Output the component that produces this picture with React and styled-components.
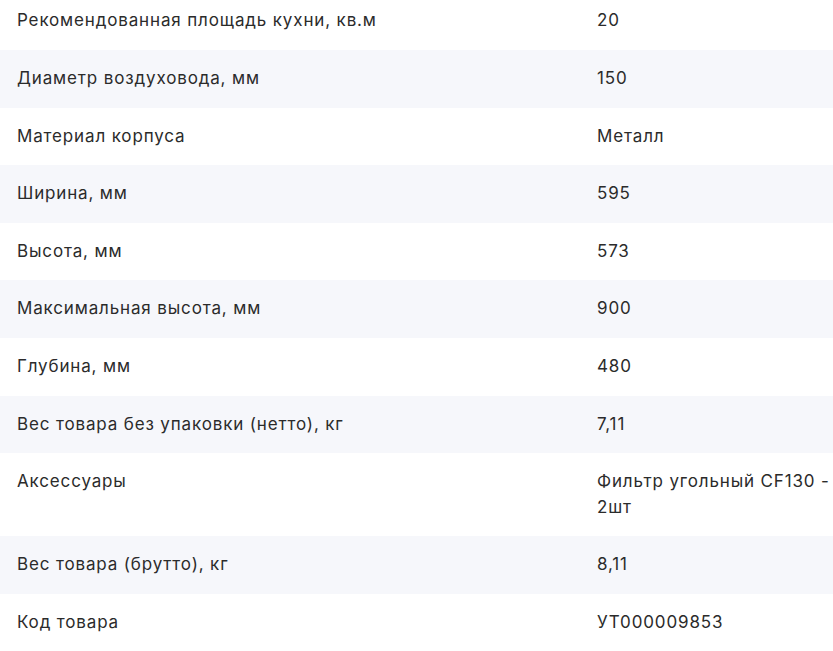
import React from "react";
import styled, { createGlobalStyle } from "styled-components";

const GlobalStyle = createGlobalStyle`
  body {
    margin: 0;
    background: #fff;
    font-family: Inter, "Noto Sans", sans-serif;
    color: #2b2b2b;
  }
`;

const SpecsTable = styled.div`
  width: 100%;
  display: flex;
  flex-direction: column;
  margin-top: -7.6px;
`;

const SpecRow = styled.div`
  display: grid;
  grid-template-columns: 580px 1fr;
  background-color: ${(p) => (p.$shaded ? "#f6f7fb" : "#fff")};
`;

const SpecCell = styled.div`
  padding: 16px 0 16px 17px;
  font-size: 17px;
  line-height: 25.6px;
  letter-spacing: 0.85px;
  font-weight: 400;
`;

const specs = [
  ["Рекомендованная площадь кухни, кв.м", "20"],
  ["Диаметр воздуховода, мм", "150"],
  ["Материал корпуса", "Металл"],
  ["Ширина, мм", "595"],
  ["Высота, мм", "573"],
  ["Максимальная высота, мм", "900"],
  ["Глубина, мм", "480"],
  ["Вес товара без упаковки (нетто), кг", "7,11"],
  ["Аксессуары", "Фильтр угольный CF130 - 2шт"],
  ["Вес товара (брутто), кг", "8,11"],
  ["Код товара", "УТ000009853"],
];

export default function App() {
  return (
    <>
      <GlobalStyle />
      <SpecsTable>
        {specs.map(([name, value], i) => (
          <SpecRow key={name} $shaded={i % 2 === 1}>
            <SpecCell>{name}</SpecCell>
            <SpecCell>{value}</SpecCell>
          </SpecRow>
        ))}
      </SpecsTable>
    </>
  );
}
